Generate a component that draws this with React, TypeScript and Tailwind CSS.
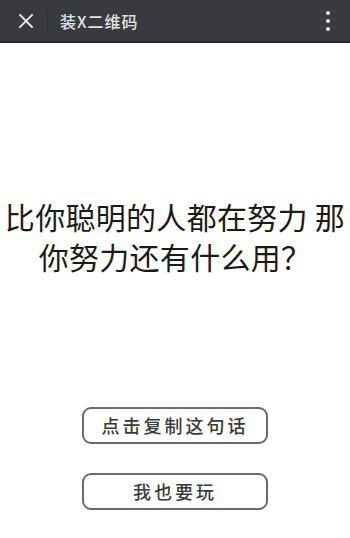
import React from "react";

function App() {
  return (
    <div
      className="w-[350px] h-[538px] bg-white flex flex-col"
      style={{ fontFamily: '"Noto Sans CJK SC", "Noto Sans", sans-serif' }}
    >
      <div className="h-[43px] bg-[#393a3e] border-b-2 border-[#2a2a2c] flex items-center shrink-0">
        <div className="w-[47px] flex items-center justify-center">
          <svg width="16" height="16" viewBox="0 0 16 16" className="ml-1">
            <path d="M2 2 L14 14 M14 2 L2 14" stroke="#e8e8e8" strokeWidth="1.8" strokeLinecap="square" />
          </svg>
        </div>
        <div className="w-px h-[22px] bg-[#2e2f32]" />
        <div className="ml-3 text-[16px] font-medium text-[#e2e2e2] tracking-[1px]">装X二维码</div>
        <div className="ml-auto mr-[20px] flex flex-col gap-[4px] items-center">
          <div className="w-[4px] h-[4px] rounded-full bg-[#e8e8e8]" />
          <div className="w-[4px] h-[4px] rounded-full bg-[#e8e8e8]" />
          <div className="w-[4px] h-[4px] rounded-full bg-[#e8e8e8]" />
        </div>
      </div>

      <div className="pt-[153px] text-center text-[30px] leading-[40px] text-[#1a1a1a] tracking-[0.3px]">
        比你聪明的人都在努力 那
        <br />
        你努力还有什么用？
      </div>

      <div className="mt-[131px] flex flex-col items-center gap-[29px]">
        <button className="w-[186px] h-[37px] border-2 border-[#6a6a6a] rounded-[9px] text-[18px] text-[#3a3a3a] tracking-[3px] font-medium">
          点击复制这句话
        </button>
        <button className="w-[186px] h-[37px] border-2 border-[#6a6a6a] rounded-[9px] text-[18px] text-[#3a3a3a] tracking-[3px] font-medium">
          我也要玩
        </button>
      </div>
    </div>
  );
}

export default App;
